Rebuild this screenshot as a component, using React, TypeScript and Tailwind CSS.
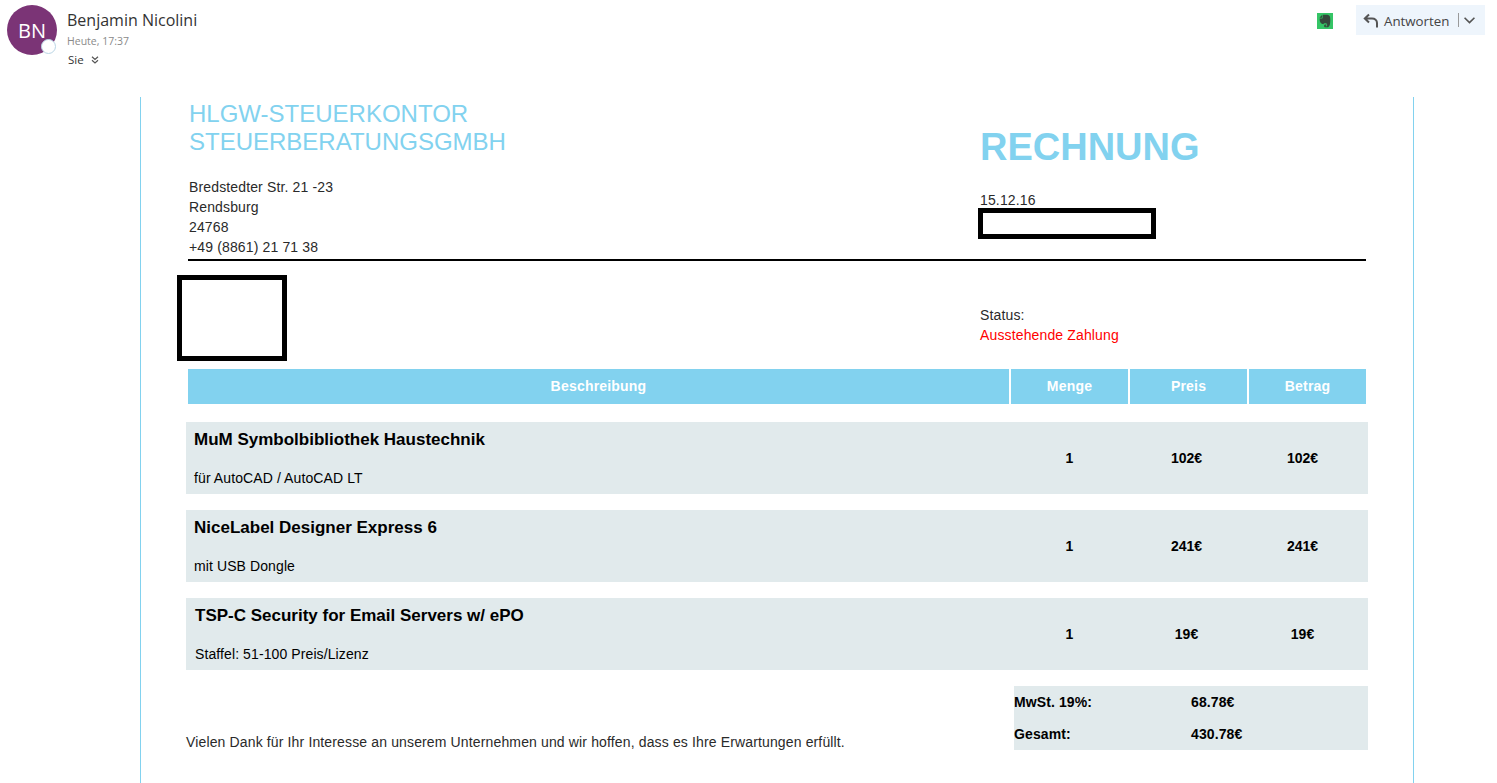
import React from "react";

const sans = "font-['Liberation_Sans',Arial,sans-serif]";
const ui = "font-['Open_Sans','Noto_Sans',sans-serif]";

function Evernote() {
  return (
    <svg viewBox="0 0 16 16" className="w-4 h-4 block">
      <rect width="16" height="16" fill="#35c566" />
      <path d="M2.600 4.400 5 2V4.800H2.600ZM5.600 1.800h4.600c1.500 0 2.500.9 2.800 2.300.4 2.200.4 5-.1 7.300-.3 1.500-1.400 2.900-3 2.900H8.600c-1 0-1.500-.7-1.500-1.400 0-.9.700-1.400 1.500-1.400h.8v1.100c-.6-.2-.9.1-.9.300 0 .3.300.5.700.5.700 0 1-.5 1-1.400 0-1.300-.9-1.700-2.100-1.700-1 0-1.500.4-1.700 1C4 11 2.600 9 2.600 5.400h2.500c.3 0 .5-.2.5-.5Z" fill="#35483c" />
    </svg>
  );
}

function Row({ title, sub, qty, price, amount, shift }: { title: string; sub: string; qty: string; price: string; amount: string; shift?: boolean }) {
  return (
    <div className="flex h-[72px] w-[1182px] ml-[45px] bg-[#e1eaec] text-black">
      <div className={`w-[825px] ${shift ? "pl-[9px]" : "pl-[8px]"} pt-[8px] flex flex-col`}>
        <div className="text-[17px] leading-[20px] font-bold">{title}</div>
        <div className="mt-[18px] text-[14px] leading-[20px] tracking-[0.1px]">{sub}</div>
      </div>
      <div className="w-[117px] pt-[1px] flex items-center justify-center text-[14px] font-bold">{qty}</div>
      <div className="w-[117px] pt-[1px] flex items-center justify-center text-[14px] font-bold">{price}</div>
      <div className="w-[115px] pt-[1px] flex items-center justify-center text-[14px] font-bold">{amount}</div>
    </div>
  );
}

function Head({ label, className }: { label: string; className: string }) {
  return <div className={`h-[35px] bg-[#82d2ef] flex items-center justify-center text-white text-[14px] tracking-[0.2px] font-bold ${className}`}>{label}</div>;
}

export default function App() {
  return (
    <div className="w-[1497px] h-[783px] overflow-hidden bg-white">
      <header className={`h-[97px] flex justify-between ${ui}`}>
        <div className="flex pl-[7px] pt-[5px]">
          <div className="relative w-[50px] h-[50px] rounded-full bg-[#7b3476] text-white flex items-center justify-center text-[20px] pt-[2px]">
            BN
            <div className="absolute left-[34px] top-[34px] w-[15px] h-[15px] rounded-full bg-white border-[1.500px] border-[#b9d5e5]" />
          </div>
          <div className="ml-[10px] flex flex-col">
            <div className="text-[16px] leading-[20px] text-[#333333] mt-[5px]">Benjamin Nicolini</div>
            <div className="text-[10.500px] leading-[14px] text-[#8a8a8a] mt-[4px]">Heute, 17:37</div>
            <div className="flex items-center text-[11.500px] leading-[14px] text-[#333333] mt-[5px] pl-px">
              Sie
              <svg viewBox="0 0 8 8" className="w-2 h-2 ml-[7px]" fill="none" stroke="#555" strokeWidth="1.200">
                <path d="M1 .8l3 2.700L7 .8M1 4.300 4 7l3-2.700" />
              </svg>
            </div>
          </div>
        </div>
        <div className="flex items-start pt-[5px] pr-[12px]">
          <div className="mt-[8px] mr-[23px]"><Evernote /></div>
          <div className="h-[30px] w-[129px] bg-[#eef5fc] flex items-center pl-[7px] text-[#444444]">
            <svg viewBox="0 0 16 16" className="w-4 h-4 mt-[2px]" fill="none" stroke="#555" strokeWidth="2">
              <path d="M6 1.500 1.800 5.500 6 9.500M2 5.500h7c2.900 0 5 1.800 5 4.500v4.500" />
            </svg>
            <span className="ml-[5px] text-[13.300px] leading-[18px] pt-[2px]">Antworten</span>
            <div className="ml-[9px] w-px h-[14px] bg-[#9a9a9a]" />
            <svg viewBox="0 0 10 6" className="w-[11px] h-[7px] ml-[5px]" fill="none" stroke="#555" strokeWidth="1.500">
              <path d="M.5.500 5 5l4.500-4.500" />
            </svg>
          </div>
        </div>
      </header>

      <main className={`ml-[140px] w-[1274px] h-[686px] border-x border-[#82d2ef] ${sans}`}>
        <section className="flex h-[162px]">
          <div className="w-[839px] pl-[48px] pt-[3px] shrink-0">
            <div className="text-[24px] leading-[28px] text-[#82d2ef]">
              HLGW-STEUERKONTOR
              <br />
              STEUERBERATUNGSGMBH
            </div>
            <div className="mt-[21px] text-[14px] leading-[20px] text-[#2a2a2a] tracking-[0.14px]">
              Bredstedter Str. 21 -23
              <br />
              Rendsburg
              <br />
              24768
              <br />
              +49 (8861) 21 71 38
            </div>
          </div>
          <div className="pt-[29px]">
            <div className="text-[38px] leading-[42px] font-bold text-[#82d2ef]">RECHNUNG</div>
            <div className="mt-[24px] text-[14px] leading-[16px] text-[#2a2a2a] tracking-[0.14px]">15.12.16</div>
            <div className="w-[178px] h-[31px] border-[5px] border-black -ml-[2px] bg-white" />
          </div>
        </section>
        <div className="ml-[47px] w-[1178px] h-[2px] bg-black" />
        <section className="flex h-[108px]">
          <div className="ml-[36px] mt-[14px] w-[110px] h-[86px] border-[5px] border-black shrink-0" />
          <div className="ml-[693px] pt-[44px] text-[14px] leading-[20px] text-[#2a2a2a] tracking-[0.14px]">
            <div>Status:</div>
            <div className="text-[#ff0000]">Ausstehende Zahlung</div>
          </div>
        </section>
        <div className="ml-[47px] flex gap-[2px]">
          <Head label="Beschreibung" className="w-[821px]" />
          <Head label="Menge" className="w-[117px]" />
          <Head label="Preis" className="w-[117px]" />
          <Head label="Betrag" className="w-[117px]" />
        </div>
        <div className="mt-[18px] flex flex-col gap-[16px]">
          <Row title="MuM Symbolbibliothek Haustechnik" sub="für AutoCAD / AutoCAD LT" qty="1" price="102€" amount="102€" />
          <Row title="NiceLabel Designer Express 6" sub="mit USB Dongle" qty="1" price="241€" amount="241€" />
          <Row title="TSP-C Security for Email Servers w/ ePO" sub="Staffel: 51-100 Preis/Lizenz" qty="1" price="19€" amount="19€" shift />
        </div>
        <section className="mt-[16px] ml-[45px] w-[1182px] flex">
          <div className="w-[828px] pt-[46px] text-[14px] leading-[20px] text-[#2a2a2a] tracking-[0.14px]">
            Vielen Dank für Ihr Interesse an unserem Unternehmen und wir hoffen, dass es Ihre Erwartungen erfüllt.
          </div>
          <div className="w-[354px] h-[64px] bg-[#e1eaec] text-[14px] font-bold text-black tracking-[0.1px]">
            <div className="flex h-[32px] items-center"><span className="w-[177px]">MwSt. 19%:</span><span>68.78€</span></div>
            <div className="flex h-[32px] items-center"><span className="w-[177px]">Gesamt:</span><span>430.78€</span></div>
          </div>
        </section>
      </main>
    </div>
  );
}
